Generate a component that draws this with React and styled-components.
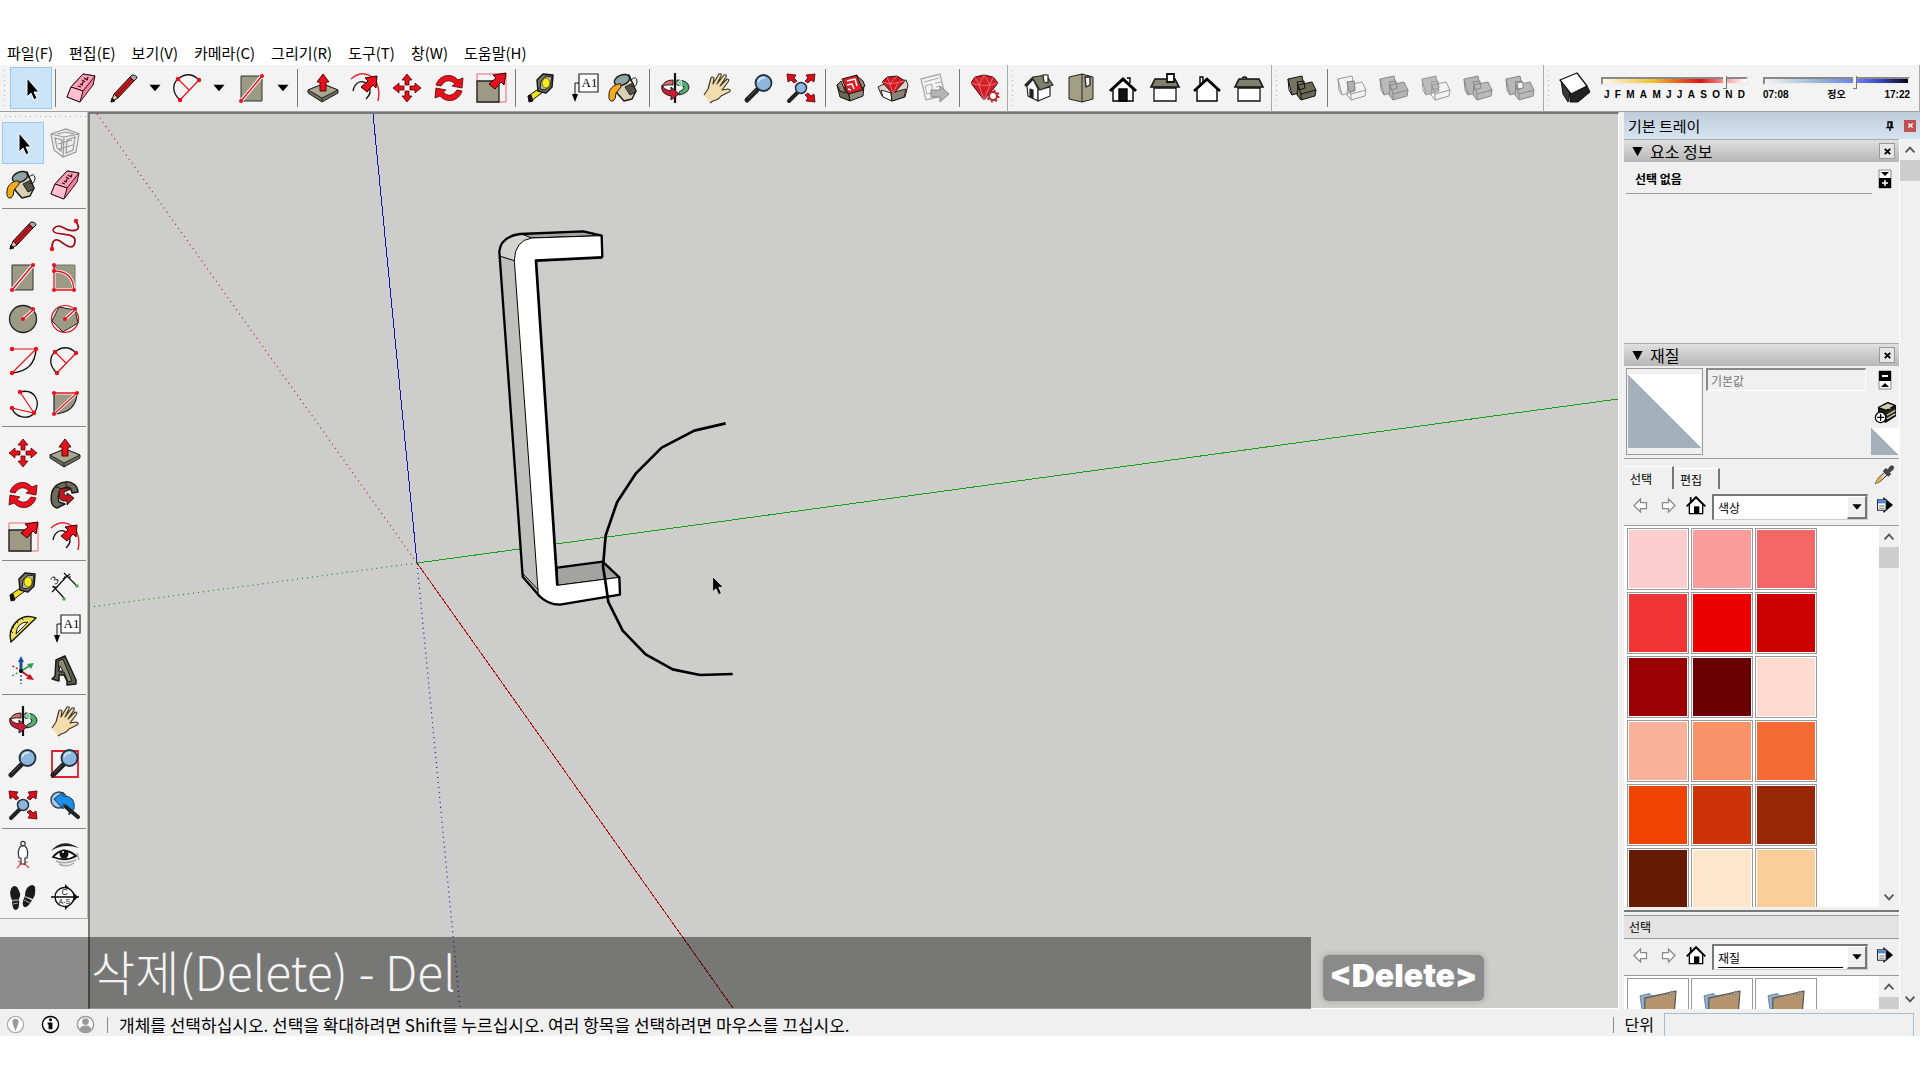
import styled, { createGlobalStyle } from 'styled-components'

const GlobalStyle = createGlobalStyle`
    * {
        box-sizing: border-box;
    }

    body {
        margin: 0;
        background: #fff;
        font-family: 'Noto Sans CJK KR', 'Liberation Sans', sans-serif;
        color: #000;
    }

    button {
        padding: 0;
        border: 0;
        background: none;
        font: inherit;
        color: inherit;
    }
`

/* ---------- icons, all drawn on a 30 x 30 grid ---------- */

const RED = '#e8101c'
const STONE = '#9c9a84'

const Drawing = styled.svg`
    display: block;
    width: ${({ $size }) => $size || 30}px;
    height: ${({ $size }) => $size || 30}px;
    flex: none;
    overflow: visible;
    fill: none;
`

const lens = (
    <>
        <path d="M3 27L13 17" stroke="#222" strokeWidth="5" strokeLinecap="round" />
        <path d="M4 25L12 17" stroke="#555" strokeWidth="1" />
        <circle cx="19.500" cy="10" r="8" fill="#8db7de" stroke="#24303c" strokeWidth="1.800" />
        <path d="M14 9Q16 4 21 5" stroke="#cfe3f4" strokeWidth="2" />
    </>
)

const solid = (a, b, line) => (
    <g stroke={line} strokeLinejoin="round" transform="translate(-1)">
        <path d="M1 6L15 3L18 18L5 22Z" fill={a} />
        <path d="M1 6L2 17L5 22" />
        <path d="M11 12L25 9L29 17L28 23L14 27L10 22Z" fill={b} />
        <path d="M11 12L14 21L29 17M14 21V27" />
        <path d="M10 9L17 8L18 15L12 17Z" />
    </g>
)

const icons = {
    select: <path d="M11 5V24L15 20L18 27L21 25L18 19H23Z" fill="#000" stroke="#fff" strokeWidth="1" />,
    eraser: (
        <g stroke="#2a1018" strokeLinejoin="round">
            <path d="M1 24L5 14L17 1L29 3L27 12L14 29Z" fill="#f7809c" />
            <path d="M5 14L17 1L29 3L17 18Z" fill="#ff9fb6" />
            <path d="M5 14L17 18L14 29L1 24Z" fill="#ffc0cd" />
            <path d="M12 13L15 14M14 11L16 12L17 9M16 7L19 9M18 5L21 7L22 4" strokeWidth="1.300" />
        </g>
    ),
    pencil: (
        <g stroke="#1d1012" strokeLinejoin="round">
            <path d="M2 29L5 21L9 25Z" fill="#d9c493" />
            <path d="M2 29L3 25L6 28Z" fill="#111" />
            <path d="M5 21L21 4L25 8L9 25Z" fill="#c0181e" />
            <path d="M7 23L23 6" stroke="#6b0c10" />
            <path d="M21 4L23 2Q28 2 28 5L25 8Z" fill="#a8a5ad" />
        </g>
    ),
    arc: (
        <>
            <path d="M7 27C-2 19 0 10 5 6Q16 -3 26 7" stroke="#111" strokeWidth="1.300" />
            <path d="M7 27L26 7M5 6L16 17" stroke={RED} strokeWidth="1.200" />
            <g fill={RED}><circle cx="5" cy="6" r="2.200" /><circle cx="26" cy="7" r="2.200" /><circle cx="7" cy="27" r="2.200" /></g>
        </>
    ),
    rect: (
        <>
            <path d="M4 3H25V28H4Z" fill={STONE} stroke="#333" />
            <path d="M4 28L25 3" stroke="#fff" strokeWidth="3.500" />
            <path d="M4 28L25 3" stroke={RED} strokeWidth="1.500" />
            <g fill={RED}><circle cx="4" cy="28" r="2" /><circle cx="25" cy="3" r="2" /></g>
        </>
    ),
    push: (
        <g stroke="#222" strokeLinejoin="round">
            <path d="M0 17L15 11L30 17V20L14 29L0 20Z" fill="#6e6c5a" />
            <path d="M0 17L15 11L30 17L14 25Z" fill="#aaa892" />
            <path d="M14 25V29" />
            <path d="M15 1L21 9H18V18H12V9H9Z" fill={RED} stroke="#500" />
        </g>
    ),
    offset: (
        <>
            <path d="M1 6Q8 0 15 1C26 3 31 15 28 28" stroke="#e02a34" strokeWidth="1.500" />
            <path d="M3 18C5 8 13 6 18 12Q23 20 16 26" stroke="#111" strokeWidth="1.300" />
            <path d="M27 3L26 15L23 12L17 19L11 14L18 8L15 5Z" fill={RED} stroke="#300" />
        </>
    ),
    move: (
        <g fill={RED} stroke="#500" strokeWidth=".8">
            {[0, 90, 180, 270].map((a) => (
                <path key={a} transform={`rotate(${a} 15 15)`} d="M15 1L20 7H17V12H13V7H10Z" />
            ))}
        </g>
    ),
    rotate: (
        <g fill={RED} stroke="#500" strokeWidth=".8">
            <path d="M2 12C5 2 17 -1 24 7L29 5L28 15L18 13L21 11C16 6 11 7 7 13Z" />
            <path d="M28 18C25 28 13 31 6 23L1 25L2 15L12 17L9 19C14 24 19 23 23 17Z" />
        </g>
    ),
    scale: (
        <>
            <path d="M1 1H30V29H1Z" stroke="#e66" />
            <path d="M1 8H23V29H1Z" fill={STONE} stroke="#222" strokeWidth="1.300" />
            <path d="M30 0L28 12L25 9L19 16L13 11L20 5L17 2Z" fill={RED} stroke="#300" />
        </>
    ),
    tape: (
        <g stroke="#151515" strokeLinejoin="round">
            <path d="M2 23L14 15L17 19L5 28Z" fill="#f0df20" />
            <path d="M2 23L5 22L7 28L3 29Z" fill="#111" />
            <path d="M11 7L17 1L27 2L26 14L20 20L12 18Z" fill="#77736c" strokeWidth="1.500" />
            <path d="M15 8L20 3L26 4L24 13L19 17L14 16Z" fill="#b9b6ae" />
            <ellipse cx="20" cy="10" rx="4" ry="5" fill="#f6ea18" stroke="#6d6a20" />
        </g>
    ),
    text: (
        <g transform="translate(2)">
            <path d="M9 1H28V19H9Z" fill="#fff" stroke="#222" strokeWidth="1.200" />
            <path d="M9 10H5V22" stroke="#111" />
            <path d="M2 21H8L5 29Z" fill="#000" />
            <text x="11.500" y="14" fontFamily="Liberation Serif, serif" fontSize="13" fill="#000">A1</text>
        </g>
    ),
    paint: (
        <g stroke="#1c1c1a" strokeLinejoin="round" transform="translate(-2)">
            <path d="M8 9L21 2L28 18L24 26L16 28L9 20Z" fill="#d8cfb4" strokeWidth="1.500" />
            <path d="M17 14L25 10L28 19L22 22Z" fill="#54524a" />
            <ellipse cx="14" cy="7" rx="8" ry="5" transform="rotate(-22 14 7)" fill="#8da3a5" strokeWidth="1.500" />
            <path d="M22 8Q29 1 29 9Q28 15 23 13" />
            <path d="M13 11C8 10 1 15 1 21Q0 29 5 28Q8 26 8 20L13 14Z" fill="#f4ac1e" />
        </g>
    ),
    orbit: (
        <g stroke="#222" strokeLinejoin="round">
            <path d="M13 7Q3 7 2 15Q2 11 13 12Z" fill="#d66" />
            <path d="M17 7Q28 7 29 14Q29 20 19 22V19Q24 17 24 14Q22 12 17 12Z" fill="#4fae74" />
            <path d="M15 0V30" stroke="#111" strokeWidth="2.200" />
            <path d="M2 12Q0 21 11 23V27L19 21L11 14V18Q4 17 2 12Z" fill="#cc1c34" />
            <path d="M21 6L17 10L22 14Z" fill="#7cc897" stroke="#fff" strokeWidth=".7" />
        </g>
    ),
    hand: (
        <path
            d="M2 22L6 16L9 5Q10 3 12 5L11 11L17 1Q20 0 19 3L15 11L22 2Q25 1 24 4L18 13L25 6Q28 6 26 9L20 17L26 16Q30 17 27 19L19 23Q16 27 11 28L8 30"
            fill="#f3dcae"
            stroke="#41382c"
            strokeWidth="1.200"
            strokeLinejoin="round"
        />
    ),
    zoom: lens,
    window: (
        <>
            <path d="M2 3H28V29H2Z" stroke="#e0202c" strokeWidth="1.800" />
            {lens}
        </>
    ),
    extents: (
        <>
            <path d="M3 28L12 19" stroke="#222" strokeWidth="4" strokeLinecap="round" />
            <circle cx="15" cy="15" r="5.500" fill="#8db7de" stroke="#24303c" strokeWidth="1.500" />
            <g fill="#d4121e" stroke="#500" strokeWidth=".8">
                <path d="M1 1L10 2L8 5L11 8L8 10L5 7L2 9Z" />
                <path d="M29 1L20 2L22 5L19 8L22 10L25 7L28 9Z" />
                <path d="M29 29L20 28L22 25L19 22L22 20L25 23L28 21Z" />
            </g>
        </>
    ),
    previous: (
        <>
            <circle cx="9" cy="10" r="8" fill="#a8c8e0" stroke="#35424e" strokeWidth="1.400" />
            <path d="M4 9L13 2V6Q26 6 24 19L19 25Q20 15 13 14V19Z" fill="#1d8fe8" stroke="#0c3b66" />
            <path d="M16 17L28 27" stroke="#222" strokeWidth="4" strokeLinecap="round" />
        </>
    ),
    warehouse: (
        <g stroke="#181210" strokeLinejoin="round">
            <path d="M1 12L12 16L14 28L4 24Z" fill="#6e6655" />
            <path d="M12 16L28 12L27 23L14 28Z" fill="#93897a" />
            <path d="M6 6L21 2L27 17L12 21Z" fill="#dd1c26" />
            <path d="M11 8L19 6L21 13M11 12L16 11L18 16M12 16L15 17" stroke="#fff" strokeWidth="1.500" />
            <path d="M1 12L5 8L10 20L4 18Z" fill="#8f8676" />
            <path d="M21 3L27 8L29 13L26 15Z" fill="#93897a" />
        </g>
    ),
    extension: (
        <g stroke="#2a1a18" strokeLinejoin="round">
            <path d="M0 14L8 10L28 7L30 12L27 24L14 28L4 23Z" fill="#ddd8cf" />
            <path d="M3 17L13 20L14 28L5 24Z" fill="#fff" />
            <path d="M13 20L28 16L26 24L14 28Z" fill="#8a8377" />
            <path d="M4 9L9 4L19 3L27 8L15 21Z" fill="#cf1822" />
            <path d="M4 9L12 11L27 8M12 11L15 21L20 9M9 4L12 11L19 3" stroke="#ff8d8d" strokeWidth=".7" />
        </g>
    ),
    layout: (
        <g stroke="#aaa">
            <path d="M1 6L20 1L25 22L6 27Z" fill="#f4f4f4" strokeWidth="1.300" />
            <path d="M4 9L19 5M5 13L12 11V20L7 21ZM15 10L21 9M16 14L21 13" />
            <path d="M11 17H20V13L29 21L20 29V24H11Z" fill="#b4b4b4" stroke="#888" />
        </g>
    ),
    ruby: (
        <>
            <path d="M1 10L5 4L14 2L23 4L28 10L14 27Z" fill="#d0202a" stroke="#500" />
            <path d="M1 10Q14 15 28 10M5 4L9 12L14 27L20 12L23 4M9 12L14 2L20 12" stroke="#ff9a9a" strokeWidth=".6" />
            <circle cx="23" cy="23" r="4" fill="#fff" stroke="#b3242c" strokeWidth="2" />
            <circle cx="23" cy="23" r="5.500" stroke="#b3242c" strokeWidth="2" strokeDasharray="2 2.300" />
        </>
    ),
    iso: (
        <g stroke="#222" strokeLinejoin="round" strokeWidth="1.200">
            <path d="M3 13L9 6L14 16V28L4 23Z" fill="#fff" />
            <path d="M14 17L26 14V23L14 28Z" fill="#fff" />
            <path d="M1 12L9 4L22 2L29 12L16 17L9 6L2 13Z" fill="#817f6c" />
            <path d="M6 16L9 17V25L6 24Z" fill="#222" />
            <path d="M19 2H24V10L20 9Z" fill="#fff" />
        </g>
    ),
    top: (
        <g stroke="#222" strokeLinejoin="round">
            <path d="M3 4L16 1L27 4V26L16 29L3 26Z" fill="#a19f86" />
            <path d="M16 1V29" />
            <path d="M19 4H24V12L20 14Z" fill="#f4f4f4" strokeWidth="1.300" />
        </g>
    ),
    front: (
        <g stroke="#000" strokeWidth="1.400">
            <path d="M5 16L15 7L25 16V28H5Z" fill="#fff" />
            <path d="M19 5H22V10" />
            <path d="M2 18L15 6L28 18" strokeWidth="3" />
            <path d="M11 16H19V28H11Z" fill="#111" />
        </g>
    ),
    right: (
        <g stroke="#111" strokeWidth="1.300">
            <path d="M4 15H26V28H4Z" fill="#fff" />
            <path d="M5 6H25L29 14H1Z" fill="#827f6c" strokeWidth="1.600" />
            <path d="M17 1H24V9H17Z" fill="#fff" strokeWidth="1.800" />
        </g>
    ),
    back: (
        <g stroke="#000" strokeWidth="1.400">
            <path d="M5 16L15 7L25 16V28H5Z" fill="#fff" />
            <path d="M8 11V4H11V9" fill="#fff" />
            <path d="M2 18L15 6L28 18" strokeWidth="2.600" />
        </g>
    ),
    left: (
        <g stroke="#111" strokeWidth="1.300">
            <path d="M4 15H26V28H4Z" fill="#fff" />
            <path d="M5 6H25L29 14H1Z" fill="#827f6c" strokeWidth="1.600" />
            <path d="M8 5Q11 3 13 5" />
        </g>
    ),
    outer: solid('#77755f', '#6b6955', '#111'),
    intersect: (
        <>
            {solid('none', 'none', '#999')}
            <path d="M9 9L16 8L17 17L11 19Z" fill="#b0b0b0" stroke="#888" />
        </>
    ),
    union: solid('#bbb', '#b4b4b4', '#888'),
    subtract: solid('#bbb', 'none', '#999'),
    trim: solid('#b4b4b4', '#bbb', '#888'),
    split: (
        <>
            {solid('#b8b8b8', '#b8b8b8', '#888')}
            <path d="M11 10L17 9L17 15L12 16Z" fill="#f4f4f4" stroke="#888" />
        </>
    ),
    shadow: (
        <g stroke="#111" strokeLinejoin="round">
            <path d="M1 7L10 20L8 29L3 21Z" fill="#3a3a3a" />
            <path d="M10 20L27 13L30 19L18 29H10Z" fill="#222" />
            <path d="M0 7L17 0L27 13L11 21Z" fill="#fff" strokeWidth="1.300" />
        </g>
    ),
    component: (
        <g stroke="#999" strokeWidth="1.200">
            <path d="M1 6L16 1L29 6L26 24L13 29L4 22Z" fill="#eee" />
            <path d="M1 6L14 9L29 6M14 9L13 29M5 10L12 12L11 23L7 20ZM17 12L25 9L23 22L16 25ZM7 6L16 4L24 6" />
            <path d="M8 16L22 12M9 21L23 17" />
        </g>
    ),
    freehand: (
        <>
            <path d="M26 2C34 12 20 12 14 8C6 3 -1 11 6 13C14 15 25 14 25 20C25 33 14 24 10 21C5 18 2 21 2 27" stroke="#fff" strokeWidth="3.500" />
            <path d="M26 2C34 12 20 12 14 8C6 3 -1 11 6 13C14 15 25 14 25 20C25 33 14 24 10 21C5 18 2 21 2 27" stroke="#a3101b" strokeWidth="1.800" />
            <g fill={RED}><circle cx="26" cy="1" r="2.200" /><circle cx="2" cy="29" r="2.200" /></g>
        </>
    ),
    rotatedRect: (
        <>
            <path d="M4 3H25V28H4Z" fill={STONE} stroke="#777" />
            <path d="M4 28V9Q23 9 24 28Z" stroke="#fff" strokeWidth="3" />
            <path d="M4 3V28H24Q23 9 4 9" stroke={RED} strokeWidth="1.300" />
            <g fill={RED}><circle cx="4" cy="3" r="2" /><circle cx="4" cy="9" r="2" /><circle cx="4" cy="28" r="2" /><circle cx="24" cy="28" r="2" /></g>
        </>
    ),
    circle: (
        <>
            <circle cx="15" cy="15" r="13.500" fill={STONE} stroke="#222" strokeWidth="1.300" />
            <path d="M15 15L25 6" stroke="#fff" strokeWidth="3.500" />
            <path d="M15 15L25 6" stroke={RED} strokeWidth="1.500" />
            <g fill={RED}><circle cx="15" cy="15" r="2" /><circle cx="25" cy="5" r="2" /></g>
        </>
    ),
    polygon: (
        <>
            <circle cx="15" cy="15" r="13.500" stroke={RED} strokeWidth="1.200" />
            <path d="M25 6L28 19L13 28L2 17L9 3Z" fill={STONE} stroke="#222" />
            <path d="M15 15L25 6" stroke="#fff" strokeWidth="3.500" />
            <path d="M15 15L25 6" stroke={RED} strokeWidth="1.500" />
            <g fill={RED}><circle cx="15" cy="15" r="2" /><circle cx="25" cy="5" r="2" /></g>
        </>
    ),
    arcPoints: (
        <>
            <path d="M28 3Q27 25 4 27" stroke="#111" strokeWidth="1.400" />
            <path d="M4 3H28L4 27" stroke={RED} strokeWidth="1.200" />
            <g fill={RED}><circle cx="4" cy="3" r="2.200" /><circle cx="28" cy="3" r="2.200" /><circle cx="4" cy="27" r="2.200" /></g>
        </>
    ),
    arc3: (
        <>
            <path d="M12 4C27 0 34 15 26 25C21 32 7 30 4 20" stroke="#111" strokeWidth="1.300" />
            <path d="M12 4L26 25L4 20" stroke={RED} strokeWidth="1.200" />
            <g fill={RED}><circle cx="12" cy="4" r="2.200" /><circle cx="26" cy="25" r="2.200" /><circle cx="4" cy="20" r="2.200" /></g>
        </>
    ),
    pie: (
        <>
            <path d="M4 5H27Q26 25 4 26Z" fill={STONE} stroke="#222" strokeWidth="1.200" />
            <path d="M4 26L27 5H4" stroke="#fff" strokeWidth="3" />
            <path d="M4 26L27 5H4" stroke={RED} strokeWidth="1.300" />
            <g fill={RED}><circle cx="4" cy="5" r="2" /><circle cx="27" cy="5" r="2" /><circle cx="4" cy="26" r="2" /></g>
        </>
    ),
    follow: (
        <g stroke="#1c1c1a" strokeLinejoin="round">
            <path d="M28 12C27 -2 6 -1 2 12Q-1 26 7 28L15 24L9 22Q6 12 14 8Q21 5 22 13Z" fill="#6d6b5b" strokeWidth="1.500" />
            <path d="M6 7L12 9M15 2L17 7" />
            <path d="M21 9Q8 6 9 14Q8 22 17 21V25L24 18L17 13V16Q13 15 14 12Z" fill="#c4141f" />
        </g>
    ),
    dimension: (
        <g stroke="#111">
            <path d="M5 17L17 4M3 14L14 26M14 1L26 13M2 20L8 14M13 7L20 2M2 15H8M14 5H21" strokeWidth="1.200" />
            <circle cx="14" cy="27" r="1.800" fill="#4caf50" stroke="none" />
            <circle cx="27" cy="14" r="1.800" fill="#4caf50" stroke="none" />
            <text x="2" y="11" fontSize="12" fontFamily="Liberation Serif, serif" fill="#000" stroke="none" transform="rotate(-45 6 8)">3</text>
        </g>
    ),
    protractor: (
        <g stroke="#1d1b0c" strokeLinejoin="round">
            <path d="M3 28L28 4C12 -2 -1 13 3 28Z" fill="#eddf60" strokeWidth="1.500" />
            <path d="M8 20L20 8Q9 8 8 20Z" fill="#f4f4f4" />
            <path d="M5 19L3 17M6 14L4 12M10 9L8 7M15 6L14 3" />
        </g>
    ),
    axes: (
        <g strokeWidth="1.500" transform="translate(-2)">
            <path d="M15 15V4" stroke="#1d4c9c" strokeWidth="3" />
            <path d="M15 0L18 6H12Z" fill="#1d4c9c" />
            <path d="M15 15L25 9" stroke="#3c9c4c" strokeWidth="2" />
            <path d="M28 7L25 13L21 8Z" fill="#3c9c4c" />
            <path d="M15 15L25 22" stroke="#c4161c" strokeWidth="2" />
            <path d="M28 24L20 23L24 18Z" fill="#c4161c" />
            <path d="M15 15V28" stroke="#1d4c9c" strokeDasharray="2 2" />
            <path d="M15 15L6 20" stroke="#3c9c4c" strokeDasharray="2 2" />
            <path d="M15 15L5 9" stroke="#c4161c" strokeDasharray="2 2" />
            <circle cx="15" cy="15" r="2" fill="#111" />
        </g>
    ),
    text3d: (
        <g stroke="#1b1b19" strokeLinejoin="round">
            <path d="M6 4L15 0L26 24V28L17 29V25L14 19H9V25L2 23L5 20Z" fill="#5f5d4e" strokeWidth="1.500" />
            <path d="M8 5L13 3L22 25L18 26L14 16H9Z" fill="#8a8876" />
            <path d="M10 10L13 15H9Z" fill="#f4f4f4" />
        </g>
    ),
    person: (
        <g strokeWidth="1.200">
            <path d="M9 28L15 22L21 28M11 24L20 22M10 21L21 27" stroke="#e55" />
            <path d="M13 6Q9 10 11 18L13 18V24H17V18L19 18Q21 10 17 6Z" fill="#fff" stroke="#333" />
            <circle cx="15" cy="3.500" r="2.200" fill="#fff" stroke="#333" />
        </g>
    ),
    eye: (
        <>
            <path d="M1 11Q12 -3 29 8Q13 3 1 11Z" fill="#222" />
            <path d="M3 17Q13 5 26 16Q16 22 3 17Z" fill="#fff" stroke="#111" strokeWidth="1.800" />
            <circle cx="14" cy="14" r="4.500" fill="#111" />
            <circle cx="13" cy="12" r="1" fill="#fff" />
            <path d="M6 21Q15 25 26 20M9 24Q17 28 24 23M27 13L29 20" stroke="#aaa" strokeWidth="1.500" />
        </>
    ),
    walk: (
        <>
            <g fill="#1a1a1a">
                <path d="M3 7Q5 2 9 5Q14 12 11 17L4 18Q1 12 3 7Z" />
                <path d="M4 18L11 17Q12 27 8 28Q4 28 4 18Z" />
                <path d="M20 5Q25 1 27 5Q28 12 25 17L17 14Q17 8 20 5Z" />
                <path d="M17 14L24 18Q20 26 16 25Q13 22 17 14Z" />
            </g>
            <path d="M4 19L11 18M5 22L10 21M17 15L24 18M16 18L22 21" stroke="#ccc" strokeWidth=".8" />
        </>
    ),
    section: (
        <>
            <path d="M15 2L28 15L15 28Z" fill="#111" />
            <circle cx="14.500" cy="15" r="9.500" fill="#fff" stroke="#111" strokeWidth="1.400" />
            <path d="M1 15H29" stroke="#111" strokeWidth="1.600" />
            <text x="11.500" y="13" fontSize="9" fontFamily="Liberation Sans, sans-serif" fill="#111">C</text>
            <text x="8.500" y="22" fontSize="7" fontFamily="Liberation Sans, sans-serif" fill="#111">A-S</text>
        </>
    ),
    home: (
        <>
            <path d="M5 14V28H25V14L15 4Z" fill="#fff" stroke="#000" strokeWidth="2" />
            <path d="M1 17L15 3L29 17M7 10V3" stroke="#000" strokeWidth="2.500" />
            <path d="M12 17H20V28H12Z" fill="#000" />
        </>
    ),
    prev: <path d="M2 15L15 2V9H27V21H15V28Z" fill="#fff" stroke="#888" strokeWidth="2.500" />,
    next: <path d="M28 15L15 2V9H3V21H15V28Z" fill="#fff" stroke="#888" strokeWidth="2.500" />,
    detail: (
        <>
            <path d="M12 0L30 15L12 30Z" fill="#000" />
            <path d="M1 5H17V25H1Z" fill="#fff" stroke="#1d2c44" strokeWidth="2" />
            <path d="M2 6H16V12H2Z" fill="#4f87cf" />
            <path d="M4 17H14M4 21H14" stroke="#777" strokeWidth="2" />
        </>
    ),
    dropper: (
        <>
            <path d="M2 28L6 20L18 9L22 13L9 25Z" fill="#d8d3c0" stroke="#333" strokeWidth="1.500" />
            <path d="M2 28L6 20L12 17L10 24Z" fill="#e7b04a" />
            <path d="M14 9L18 5L21 8Q24 -1 29 2Q31 7 23 11L25 14L21 17Z" fill="#444" stroke="#222" />
        </>
    ),
    create: (
        <g stroke="#000" strokeWidth="1.800" strokeLinejoin="round">
            <path d="M5 8L18 1L29 5V20L15 29L6 22Z" fill="#222" />
            <path d="M5 8L18 1L29 5L16 12Z" fill="#cdc7a5" />
            <path d="M10 6L22 9M17 19L29 12M17 24L29 17" stroke="#d8d2b2" />
            <circle cx="8" cy="22" r="7.500" fill="#fff" />
            <path d="M8 17V27M3 22H13" />
        </g>
    ),
    folder: (
        <g stroke="#5b6670" strokeWidth=".6" strokeLinejoin="round">
            <path d="M0 4L8 2L10 4L27 2V25H3Z" fill="#86b2d3" />
            <path d="M4 6L30 0L28 26H4Z" fill="#b3946c" stroke="#555" strokeWidth="1" />
            <path d="M24 3L26 0V3Z" fill="#fff" />
        </g>
    ),
    pin: <path d="M9 3H21V19H9ZM18 3V19M4 20H26M15 20V30" stroke="#000" strokeWidth="4" />,
    cross: <path d="M6 6L24 24M24 6L6 24" stroke="currentColor" strokeWidth="6" />,
    down: <path d="M1 7H29L15 23Z" fill="#000" />,
    triangle: <path d="M1 3H29L15 28Z" fill="#000" />,
    chevronUp: <path d="M4 21L15 9L26 21" stroke="#555" strokeWidth="4.500" />,
    chevronDown: <path d="M4 9L15 21L26 9" stroke="#555" strokeWidth="4.500" />,
}

function Icon({ name, size }) {
    return (
        <Drawing viewBox="0 0 30 30" $size={size} aria-hidden="true">
            {icons[name]}
        </Drawing>
    )
}

/* ---------- window ---------- */

const Window = styled.div`
    height: 100vh;
    padding: 40px 0 44px;
    display: flex;
    flex-direction: column;
    overflow: hidden;
`

const MenuBar = styled.nav`
    display: flex;
    gap: 16px;
    height: 25px;
    padding-left: 7px;
    flex: none;
`

const MenuItem = styled.button`
    font-size: 15px;
    line-height: 25px;
    white-space: nowrap;
`

const ToolRow = styled.div`
    display: flex;
    flex: none;
    height: 47px;
    background: #f3f3f3;
    border-bottom: 1px solid #a0a0a0;
`

const ToolBar = styled.div`
    display: flex;
    align-items: center;
    padding-right: 1px;
    border-right: 1px solid #a8a8a8;
    flex-grow: ${({ $grow }) => ($grow ? 1 : 0)};
`

const Grip = styled.div`
    width: 3px;
    height: 41px;
    margin: 0 4px 0 3px;
    background: radial-gradient(circle, #aaa 1px, transparent 1px) 0 0 / 3px 5px;
`

const ToolButton = styled.button`
    width: 42px;
    height: 42px;
    flex: none;
    display: flex;
    align-items: center;
    justify-content: center;
    background: ${({ $active }) => ($active ? '#cce4f7' : 'none')};
    border: 1px solid ${({ $active }) => ($active ? '#99c9ef' : 'transparent')};
`

const SplitButton = styled(ToolButton)`
    width: 64px;
    justify-content: space-between;
    padding: 0 4px 0 6px;
`

const Divider = styled.div`
    width: 1px;
    height: 38px;
    margin: 0 4px 0 3px;
    background: #777;
    flex: none;
`

const Sliders = styled.div`
    display: grid;
    grid-template-columns: 1fr 1fr;
    gap: 15px;
    flex: 1;
    padding: 0 8px 0 5px;
`

const SliderBox = styled.label`
    display: block;
`

const Range = styled.input`
    appearance: none;
    display: block;
    width: 100%;
    height: 12px;
    margin: 0;
    background: none;

    &::-webkit-slider-runnable-track {
        height: 8px;
        border: 2px solid #888;
        border-right-color: #eee;
        border-bottom-color: #eee;
        background: ${({ $fill }) => $fill};
    }

    &::-webkit-slider-thumb {
        appearance: none;
        width: 4px;
        height: 13px;
        margin-top: -3px;
        background: #f3f3f3;
        border-right: 1px solid #777;
        border-bottom: 1px solid #777;
    }
`

const Ticks = styled.span`
    display: flex;
    justify-content: space-between;
    padding: 2px ${({ $inset }) => $inset || 0}px 0;
    font: bold 10px/12px 'Liberation Sans', 'Noto Sans CJK KR', sans-serif;
`

const Workspace = styled.div`
    position: relative;
    flex: 1;
    min-height: 0;
    display: flex;
    background: #f0f0f0;
`

const SideBar = styled.div`
    width: 88px;
    flex: none;
`

const SideTools = styled.div`
    height: 807px;
    padding: 3px 1px 0 2px;
    background: #f3f3f3;
    border-right: 1px solid #bbb;
    border-bottom: 1px solid #aaa;
`

const SideGrip = styled.div`
    height: 3px;
    margin: 0 0 4px 1px;
    background: radial-gradient(circle, #aaa 1px, transparent 1px) 0 0 / 5px 3px;
`

const SideGroup = styled.div`
    display: grid;
    grid-template-columns: 42px 42px;

    & + & {
        border-top: 1px solid #888;
        margin: 2px 0 0;
        padding-top: 5px;
    }
`

const Viewport = styled.main`
    flex: 1;
    min-width: 0;
    background: #cdcdcb;
    border-top: 2px solid #777;
    border-left: 2px solid #777;
    border-right: 1px solid #fff;
    border-bottom: 1px solid #fff;
`

const Scene = styled.svg`
    display: block;
    width: 100%;
    height: 100%;
`

const Caption = styled.div`
    position: absolute;
    left: 0;
    bottom: 0;
    width: 68.3%;
    height: 72px;
    padding-left: 91px;
    background: rgba(0, 0, 0, 0.42);
    color: #f4f4f4;
    font-size: 48px;
    font-weight: 300;
    line-height: 66px;
    white-space: nowrap;
`

const KeyBadge = styled.div`
    position: absolute;
    left: 68.9%;
    bottom: 8px;
    width: 161px;
    height: 46px;
    border-radius: 6px;
    background: #8a8a8a;
    box-shadow: 0 0 5px 2px rgba(0, 0, 0, 0.12);
    color: #fff;
    font: 900 32px/42px Inter, sans-serif;
    text-align: center;
`

/* ---------- tray ---------- */

const Tray = styled.aside`
    width: 301px;
    flex: none;
    display: flex;
    flex-direction: column;
    padding-left: 5px;
`

const TrayTitle = styled.header`
    display: flex;
    align-items: center;
    gap: 9px;
    height: 27px;
    flex: none;
    padding: 0 4px;
    background: linear-gradient(#bfcddb, #d6e3f1);
    font-size: 15px;
`

const Grow = styled.span`
    flex: 1;
`

const CloseTray = styled.button`
    width: 12px;
    height: 12px;
    display: grid;
    place-items: center;
    background: #c25050;
    color: #fff;
`

const TrayBody = styled.div`
    flex: 1;
    min-height: 0;
    display: flex;
`

const Panels = styled.div`
    flex: 1;
    min-width: 0;
    display: flex;
    flex-direction: column;
    border-right: 1px solid #fff;
`

const PanelTitle = styled.h2`
    display: flex;
    align-items: center;
    gap: 7px;
    height: 23px;
    flex: none;
    margin: 0;
    padding: 0 4px 0 8px;
    background: linear-gradient(#e0e0e0, #b6b6b6);
    border-top: 1px solid #aaa;
    font-size: 16px;
    font-weight: 400;
`

const ClosePanel = styled.button`
    width: 16px;
    height: 16px;
    display: grid;
    place-items: center;
    background: #e6e6e6;
    border: 1px solid #999;
`

const EntityInfo = styled.section`
    height: 181px;
    flex: none;
    padding: 7px 5px 0 2px;
`

const EntityRow = styled.div`
    display: flex;
    justify-content: space-between;
    align-items: center;
    padding: 0 0 0 9px;
    font-size: 12px;
    font-weight: 700;
    line-height: 20px;
`

const Rule = styled.hr`
    margin: 4px 22px 0 0;
    border: 0;
    border-top: 1px solid #999;
`

const MaterialTop = styled.div`
    display: grid;
    grid-template-columns: 77px 1fr 28px;
    gap: 3px;
    height: 93px;
    flex: none;
    padding: 2px 0 3px 2px;
    border-bottom: 1px solid #999;
`

const Preview = styled.div`
    height: 87px;
    padding: 5px 1px;
    border: 1px solid #999;
`

const NameInput = styled.input`
    width: 160px;
    height: 23px;
    padding: 0 3px;
    border: 2px solid #888;
    border-right: 1px solid #fff;
    border-bottom: 1px solid #fff;
    background: #f0f0f0;
    color: #777;
    font: 12px 'Noto Sans CJK KR', sans-serif;
`

const IconColumn = styled.div`
    display: grid;
    grid-template-rows: 31px 1fr 27px;
    justify-items: center;
    padding-top: 3px;
`

const TwoTone = styled.div`
    width: 100%;
    height: ${({ $height }) => $height};
    background: linear-gradient(to top right, #a5b1ba 50%, #fff 50%);
`

const Tabs = styled.div`
    display: flex;
    align-items: flex-end;
    height: 30px;
    flex: none;
    padding-right: 5px;
`

const Tab = styled.button`
    width: ${({ $active }) => ($active ? 50 : 46)}px;
    height: ${({ $active }) => ($active ? 23 : 21)}px;
    padding-left: 6px;
    text-align: left;
    font-size: 12px;
    border-top: 1px solid #fff;
    border-right: 2px solid #777;
`

const NavRow = styled.div`
    display: flex;
    align-items: center;
    height: 37px;
    flex: none;
    padding: 0 6px 0 9px;
    border-bottom: 1px solid #999;
`

const NavButton = styled.button`
    width: ${({ $wide }) => $wide || 28}px;
    height: 24px;
    padding-bottom: 4px;
    display: flex;
    align-items: center;
`

const Picker = styled.div`
    display: grid;
    grid-template: 23px / 1fr 20px;
    width: 156px;
    border: 2px solid #777;
    border-right: 1px solid #ccc;
    border-bottom: 1px solid #ccc;
    background: #fff;
`

const PickerSelect = styled.select`
    grid-area: 1 / 1 / 2 / 3;
    appearance: none;
    width: 100%;
    height: 23px;
    padding: 0 4px;
    border: 0;
    background: ${({ $line }) => ($line ? 'linear-gradient(#000, #000) 4px 21px / 125px 1px no-repeat' : 'none')};
    font: 12px 'Noto Sans CJK KR', sans-serif;
    color: #000;
`

const PickerArrow = styled.span`
    grid-area: 1 / 2;
    display: grid;
    place-items: center;
    height: 23px;
    background: #f0f0f0;
    border: 1px solid #fff;
    border-right: 2px solid #777;
    border-bottom: 2px solid #777;
    pointer-events: none;
`

const List = styled.div`
    flex: ${({ $height }) => ($height ? `0 0 ${$height}px` : '1 1 0')};
    min-height: 0;
    display: flex;
    background: #fff;
    overflow: hidden;
`

const Cells = styled.div`
    flex: 1;
    display: grid;
    grid-template-columns: repeat(3, 62px);
    grid-auto-rows: 62px;
    align-content: start;
    gap: 2px;
    padding: 2px 3px;
`

const Swatch = styled.button`
    border: 1px solid #999;
    padding: 1px;
    background: ${({ $color }) => $color} content-box;
`

const FolderCell = styled.button`
    display: flex;
    justify-content: center;
    padding-top: 12px;
    border: 1px solid #999;
    background: #fff;
`

const ScrollBar = styled.div`
    width: ${({ $width }) => $width || 20}px;
    flex: none;
    display: flex;
    flex-direction: column;
    justify-content: space-between;
    background: #f0f0f0;
`

const ScrollButton = styled.button`
    height: 21px;
    width: 100%;
    display: grid;
    place-items: center;
    flex: none;
`

const Thumb = styled.div`
    height: 21px;
    background: #cdcdcd;
`

const LowerTitle = styled.div`
    flex: none;
    height: 29px;
    margin-top: 3px;
    border-top: 2px solid #777a77;
    padding-top: 3px;
    font-size: 12px;
    line-height: 22px;

    span {
        display: block;
        padding-left: 5px;
        background: #e3e3e3;
        border-top: 1px solid #999;
        border-bottom: 1px solid #999;
    }
`

const StatusBar = styled.footer`
    display: flex;
    align-items: center;
    gap: 16px;
    height: 27px;
    flex: none;
    padding: 4px 6px 0 6px;
    background: #f0f0f0;
    font-size: 17px;
    line-height: 23px;
    white-space: nowrap;
`

const StatusLine = styled.span`
    width: 1px;
    height: 16px;
    background: #888;
    margin: 0 -5px 0 -4px;
`

const Units = styled.label`
    display: flex;
    gap: 10px;
    font-size: 16px;
`

const UnitsInput = styled.input`
    width: 250px;
    height: 23px;
    border: 1px solid #a9bcd0;
    border-bottom: 0;
    background: #f0f0f0;
`

const menus = ['파일(F)', '편집(E)', '보기(V)', '카메라(C)', '그리기(R)', '도구(T)', '창(W)', '도움말(H)']

const mainGroups = [
    ['push', 'offset', 'move', 'rotate', 'scale'],
    ['tape', 'text', 'paint'],
    ['orbit', 'hand', 'zoom', 'extents'],
    ['warehouse', 'extension', 'layout'],
    ['ruby'],
]

const sideGroups = [
    ['select', 'component', 'paint', 'eraser'],
    ['pencil', 'freehand', 'rect', 'rotatedRect', 'circle', 'polygon', 'arcPoints', 'arc', 'arc3', 'pie'],
    ['move', 'push', 'rotate', 'follow', 'scale', 'offset'],
    ['tape', 'dimension', 'protractor', 'text', 'axes', 'text3d'],
    ['orbit', 'hand', 'zoom', 'window', 'extents', 'previous'],
    ['person', 'eye', 'walk', 'section'],
]

const colors = [
    '#fbcdcc', '#f99c9b', '#f46766',
    '#f13536', '#ee0000', '#cc0000',
    '#9b0002', '#6a0003', '#fddccf',
    '#f9b299', '#f99268', '#f66a34',
    '#f04405', '#cd3308', '#982707',
    '#661a03', '#fee6cd', '#fbcd98',
]

const monthFill = 'linear-gradient(90deg, #fff8e8, #efc030 35%, #e01010 68%, #f08080 82%, #fff)'
const timeFill = 'linear-gradient(90deg, #f4f4f4, #92b4d4 38%, #6a7cf0 65%, #3a48c0 80%, #050510)'

function Tool({ name, active }) {
    return (
        <ToolButton type="button" aria-label={name} $active={active}>
            <Icon name={name} />
        </ToolButton>
    )
}

function TopTools() {
    return (
        <ToolRow>
            <ToolBar>
                <Grip />
                <Tool name="select" active />
                <Divider />
                <Tool name="eraser" />
                {['pencil', 'arc', 'rect'].map((name) => (
                    <SplitButton key={name} type="button" aria-label={name}>
                        <Icon name={name} />
                        <Icon name="down" size={12} />
                    </SplitButton>
                ))}
                {mainGroups.map((group) => [
                    <Divider key={group[0] + '-line'} />,
                    ...group.map((name) => <Tool key={name} name={name} />),
                ])}
            </ToolBar>
            <ToolBar>
                <Grip />
                {['iso', 'top', 'front', 'right', 'back', 'left'].map((name) => (
                    <Tool key={name} name={name} />
                ))}
            </ToolBar>
            <ToolBar>
                <Grip />
                <Tool name="outer" />
                <Divider />
                {['intersect', 'union', 'subtract', 'trim', 'split'].map((name) => (
                    <Tool key={name} name={name} />
                ))}
            </ToolBar>
            <ToolBar $grow>
                <Grip />
                <Tool name="shadow" />
                <Sliders>
                    <SliderBox>
                        <Range type="range" aria-label="month" min="0" max="100" defaultValue="86" $fill={monthFill} />
                        <Ticks $inset={3}>
                            {'JFMAMJJASOND'.split('').map((m, i) => <span key={i}>{m}</span>)}
                        </Ticks>
                    </SliderBox>
                    <SliderBox>
                        <Range type="range" aria-label="time" min="0" max="100" defaultValue="63" $fill={timeFill} />
                        <Ticks>
                            <span>07:08</span>
                            <span>정오</span>
                            <span>17:22</span>
                        </Ticks>
                    </SliderBox>
                </Sliders>
            </ToolBar>
        </ToolRow>
    )
}

function Model() {
    return (
        <Scene viewBox="90 114 1528 894" preserveAspectRatio="xMinYMin slice" fill="none">
            <g shapeRendering="crispEdges">
                <path d="M373 114L417 563" stroke="#1414b4" />
                <path d="M417 563L733 1008" stroke="#b01414" />
                <path d="M417 563L1618 399" stroke="#14a014" />
            </g>
            <g strokeWidth="1.200" strokeDasharray="1 4">
                <path d="M417 563L460 1008" stroke="#1414b4" />
                <path d="M97 114L417 563" stroke="#b42020" />
                <path d="M417 563L90 607" stroke="#149014" />
            </g>
            <g transform="translate(460 210) scale(.33333)" stroke="#000" strokeLinejoin="round">
                <path d="M118 138L118 120Q130 74 180 72L370 63L425 77L427 142L228 152L215 84L163 152L233 1155L188 1100Z" fill="#bfbfbe" stroke="none" />
                <path d="M118 138V115Q130 74 180 72L215 84Q170 90 163 152Z" fill="#d3d3d2" stroke="none" />
                <path d="M185 72L370 64L420 77L215 84Z" fill="#a3a3a2" strokeWidth="3" />
                <path d="M292 1073L428 1055L478 1102L292 1126Z" fill="#a3a3a2" strokeWidth="3" />
                <path d="M215 84L425 77L427 142L228 152L292 1126L478 1102L480 1154L300 1184Q262 1184 235 1155L163 152Q164 92 215 84Z" fill="#fff" strokeWidth="3" />
                <path d="M118 138L163 152M188 1090L235 1140" strokeWidth="3" />
                <path d="M235 1155Q262 1184 300 1184L480 1154L478 1102L428 1055L292 1073" strokeWidth="7" />
                <path d="M427 142L425 77L370 64L180 72Q122 80 118 125L188 1100L240 1160" strokeWidth="7" />
                <path d="M427 142L228 152L292 1126" strokeWidth="8" />
                <path
                    d="M797 640L703 662L605 713L527 791L471 877L437 976L429 1070L437 1120L445 1176L488 1262L557 1333L638 1378L720 1395L818 1392"
                    strokeWidth="8"
                />
                <path d="M758 1100V1145L768 1136L776 1154L784 1150L776 1132H790Z" fill="#000" stroke="#fff" strokeWidth="2" />
            </g>
        </Scene>
    )
}

function CollectionNav({ label, line }) {
    return (
        <NavRow>
            <NavButton type="button" aria-label="prev"><Icon name="prev" size={15} /></NavButton>
            <NavButton type="button" aria-label="next" $wide={25}><Icon name="next" size={15} /></NavButton>
            <NavButton type="button" aria-label="home" $wide={26}><Icon name="home" size={20} /></NavButton>
            <Picker>
                <PickerSelect aria-label="collection" $line={line}>
                    <option>{label}</option>
                </PickerSelect>
                <PickerArrow><Icon name="down" size={10} /></PickerArrow>
            </Picker>
            <Grow />
            <NavButton type="button" aria-label="detail" $wide={16}><Icon name="detail" size={16} /></NavButton>
        </NavRow>
    )
}

function Scroller({ width, end = true }) {
    return (
        <ScrollBar $width={width}>
            <div>
                <ScrollButton type="button" aria-label="up"><Icon name="chevronUp" size={12} /></ScrollButton>
                <Thumb />
            </div>
            {end && <ScrollButton type="button" aria-label="down"><Icon name="chevronDown" size={12} /></ScrollButton>}
        </ScrollBar>
    )
}

function PanelHeader({ children }) {
    return (
        <PanelTitle>
            <Icon name="triangle" size={11} />
            {children}
            <Grow />
            <ClosePanel type="button" aria-label="close"><Icon name="cross" size={9} /></ClosePanel>
        </PanelTitle>
    )
}

function MoreIcon({ flip }) {
    return (
        <Drawing viewBox="0 0 12 18" $size={18}>
            {flip ? (
                <>
                    <path d="M0 0H12V18H0Z" fill="#fff" stroke="#888" />
                    <path d="M0 0H12V10H0Z" fill="#000" />
                    <path d="M3 4H9V6H3Z" fill="#fff" />
                    <path d="M2 16H10L6 12Z" fill="#000" />
                </>
            ) : (
                <>
                    <path d="M0 0H12V18H0Z" fill="#fff" stroke="#888" />
                    <path d="M2 2H10L6 6Z" fill="#000" />
                    <path d="M0 8H12V18H0Z" fill="#000" />
                    <path d="M3 13H9M6 10V16" stroke="#fff" strokeWidth="1.500" />
                </>
            )}
        </Drawing>
    )
}

function DefaultTray() {
    return (
        <Tray>
            <TrayTitle>
                기본 트레이
                <Grow />
                <Icon name="pin" size={10} />
                <CloseTray type="button" aria-label="close"><Icon name="cross" size={7} /></CloseTray>
            </TrayTitle>
            <TrayBody>
                <Panels>
                    <PanelHeader>요소 정보</PanelHeader>
                    <EntityInfo>
                        <EntityRow>
                            선택 없음
                            <MoreIcon />
                        </EntityRow>
                        <Rule />
                    </EntityInfo>
                    <PanelHeader>재질</PanelHeader>
                    <MaterialTop>
                        <Preview><TwoTone $height="74px" /></Preview>
                        <NameInput aria-label="name" defaultValue="기본값" readOnly />
                        <IconColumn>
                            <MoreIcon flip />
                            <Icon name="create" size={21} />
                            <TwoTone $height="27px" />
                        </IconColumn>
                    </MaterialTop>
                    <Tabs>
                        <Tab type="button" $active>선택</Tab>
                        <Tab type="button">편집</Tab>
                        <Grow />
                        <NavButton type="button" aria-label="dropper" $wide={20}><Icon name="dropper" size={20} /></NavButton>
                    </Tabs>
                    <CollectionNav label="색상" />
                    <List>
                        <Cells>
                            {colors.map((c) => <Swatch key={c} type="button" aria-label={c} $color={c} />)}
                        </Cells>
                        <Scroller />
                    </List>
                    <LowerTitle><span>선택</span></LowerTitle>
                    <CollectionNav label="재질" line />
                    <List $height={33}>
                        <Cells>
                            {[1, 2, 3].map((n) => (
                                <FolderCell key={n} type="button" aria-label={`folder ${n}`}>
                                    <Icon name="folder" size={36} />
                                </FolderCell>
                            ))}
                        </Cells>
                        <Scroller end={false} />
                    </List>
                </Panels>
                <Scroller width={20} />
            </TrayBody>
        </Tray>
    )
}

function Status() {
    return (
        <StatusBar>
            <Drawing viewBox="0 0 20 20" $size={19}>
                <circle cx="10" cy="10" r="8.500" fill="#fff" stroke="#aaa" strokeWidth="1.300" />
                <path d="M10 17L7 9Q6 4 10 4Q14 4 13 9Z" fill="#999" />
            </Drawing>
            <Drawing viewBox="0 0 20 20" $size={19}>
                <circle cx="10" cy="10" r="8.500" fill="#fff" stroke="#000" strokeWidth="1.500" />
                <path d="M7 8H12V15H8V10H7Z" fill="#000" />
                <circle cx="10" cy="5" r="1.600" fill="#000" />
            </Drawing>
            <Drawing viewBox="0 0 20 20" $size={19}>
                <circle cx="10" cy="10" r="8.500" fill="#fff" stroke="#999" strokeWidth="1.500" />
                <circle cx="10" cy="7" r="3.500" fill="#999" />
                <path d="M4 16Q4 11 10 11Q16 11 16 16Q10 20 4 16Z" fill="#999" />
            </Drawing>
            <StatusLine />
            <span>개체를 선택하십시오. 선택을 확대하려면 Shift를 누르십시오. 여러 항목을 선택하려면 마우스를 끄십시오.</span>
            <Grow />
            <StatusLine />
            <Units>
                단위
                <UnitsInput type="text" />
            </Units>
        </StatusBar>
    )
}

function App() {
    return (
        <>
            <GlobalStyle />
            <Window>
                <MenuBar>
                    {menus.map((m) => <MenuItem key={m} type="button">{m}</MenuItem>)}
                </MenuBar>
                <TopTools />
                <Workspace>
                    <SideBar>
                        <SideTools>
                            <SideGrip />
                            {sideGroups.map((group) => (
                                <SideGroup key={group[0]}>
                                    {group.map((name) => (
                                        <Tool key={name} name={name} active={name === 'select'} />
                                    ))}
                                </SideGroup>
                            ))}
                        </SideTools>
                    </SideBar>
                    <Viewport>
                        <Model />
                    </Viewport>
                    <DefaultTray />
                    <Caption>삭제(Delete) - Del</Caption>
                    <KeyBadge>&lt;Delete&gt;</KeyBadge>
                </Workspace>
                <Status />
            </Window>
        </>
    )
}

export default App
